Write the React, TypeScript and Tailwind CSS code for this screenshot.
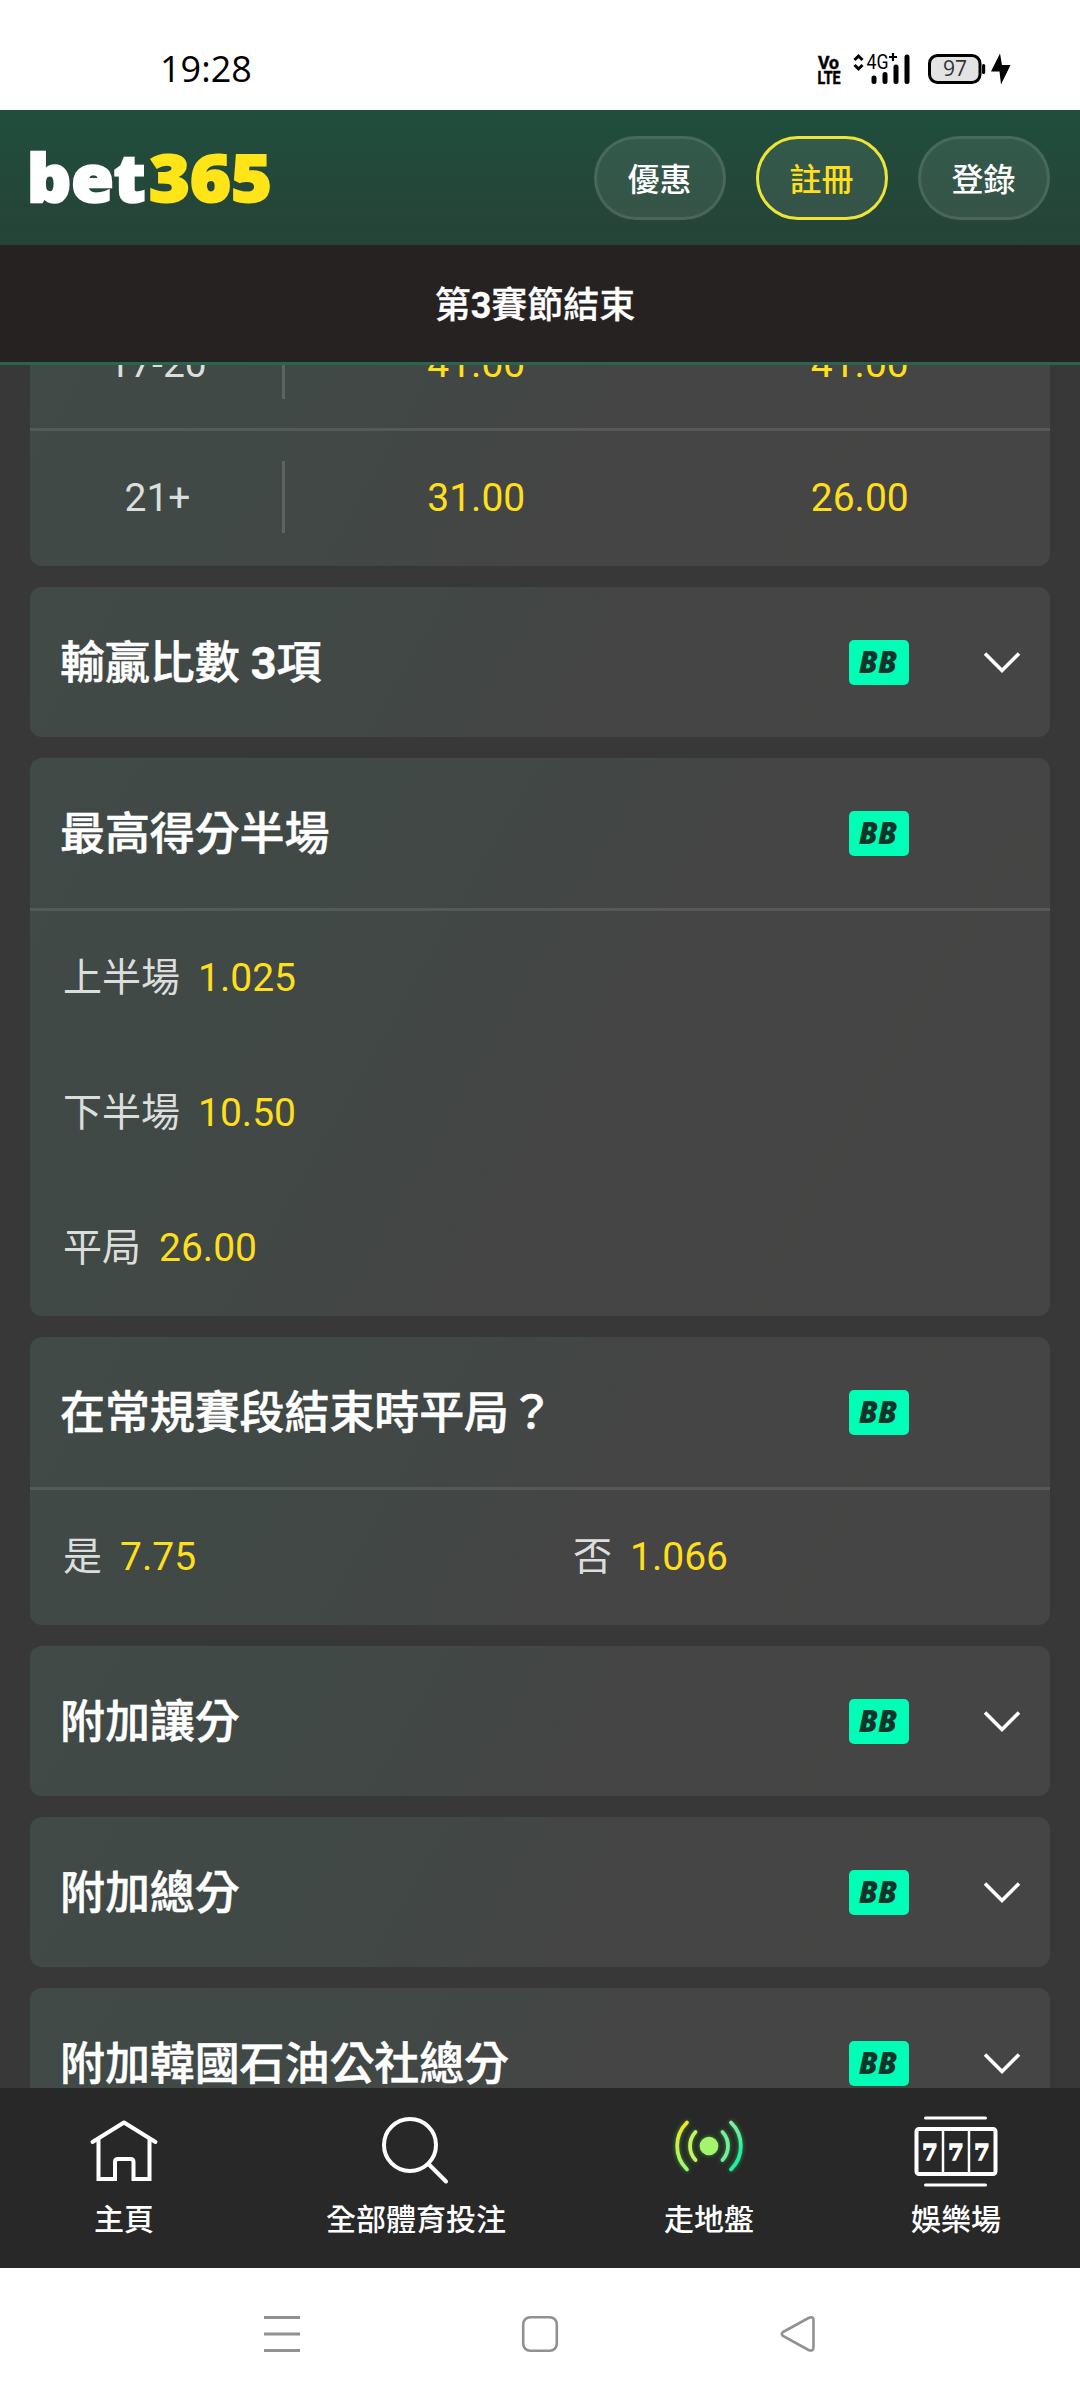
import React from "react";

const CJK = "font-['Roboto','Noto_Sans_CJK_TC',sans-serif]";

function VolteIcon() {
  return (
    <svg width="24" height="32" viewBox="0 0 24 32" stroke="black" strokeWidth="0.500" className="overflow-visible font-['Roboto',sans-serif] font-bold">
      <text x="1" y="15.500" fontSize="18.500" textLength="21" lengthAdjust="spacingAndGlyphs">Vo</text>
      <text x="0.500" y="31" fontSize="18.500" textLength="23" lengthAdjust="spacingAndGlyphs">LTE</text>
    </svg>
  );
}

function SignalIcon() {
  return (
    <svg width="58" height="32" viewBox="0 0 58 32" className="overflow-visible font-['Roboto',sans-serif]">
      <path d="M1.500 7 5.500 3 9.500 7M1.500 12 5.500 16 9.500 12" fill="none" stroke="black" strokeWidth="3" />
      <text x="13.500" y="16" fontSize="19.500" textLength="22" lengthAdjust="spacingAndGlyphs">4G</text>
      <path d="M40 0v8M36 4h8" stroke="black" strokeWidth="2.200" />
      <path d="M21 25v3.500M32 21.500v7M43 14v14.500M54 4v24.500" stroke="black" strokeWidth="5" strokeLinecap="round" />
    </svg>
  );
}

function BatteryIcon() {
  return (
    <svg width="86" height="32" viewBox="0 0 86 32" className="overflow-visible font-['Open_Sans',sans-serif] font-normal">
      <rect x="2.500" y="2.500" width="50.500" height="27" rx="8" fill="#e3e3e3" stroke="black" strokeWidth="3" />
      <rect x="55" y="11" width="3.200" height="10" rx="1.500" />
      <text x="16" y="23" fontSize="21" textLength="24" fill="#333">97</text>
      <path d="M73 0.500 64 18.500h8.500L74 31.500 83.500 12h-8.500z" />
    </svg>
  );
}

function StatusBar() {
  return (
    <div className="flex h-[110px] items-center justify-between bg-white pt-7 pr-[67px] pl-[160px] text-black">
      <span className="pb-px font-['Open_Sans',sans-serif] text-[36px] leading-none">19:28</span>
      <div className="flex items-center">
        <VolteIcon />
        <span className="w-[12px]" />
        <SignalIcon />
        <span className="w-[16px]" />
        <BatteryIcon />
      </div>
    </div>
  );
}

function Logo() {
  return (
    <svg width="246" height="60" viewBox="0 0 246 60" className="overflow-visible font-['Open_Sans',sans-serif] font-extrabold">
      <text x="-3" y="54" fontSize="65" fill="#fff" stroke="#fff" strokeWidth="2.400" textLength="118.500" lengthAdjust="spacingAndGlyphs">bet</text>
      <text x="119" y="54" fontSize="66" fill="#ffe418" stroke="#ffe418" strokeWidth="2" textLength="123" lengthAdjust="spacingAndGlyphs">365</text>
    </svg>
  );
}

function Header() {
  const base = "flex h-[84px] w-[132px] items-center justify-center rounded-full border-[3px] bg-white/[0.08] pt-[3px] pr-[1px] text-[32px] font-medium";
  return (
    <header className="flex h-[135px] items-center justify-between bg-linear-to-b from-[#1f4e3d] to-[#264338] px-[30px]">
      <Logo />
      <div className="flex gap-[30px] pt-[1px]">
        <button className={`${base} border-white/10 text-white`}>優惠</button>
        <button className={`${base} border-[#ece538] text-[#ffdf1b]`}>註冊</button>
        <button className={`${base} border-white/10 text-white`}>登錄</button>
      </div>
    </header>
  );
}

function Card({ children }: { children: React.ReactNode }) {
  return (
    <section className="overflow-hidden rounded-[12px] bg-[linear-gradient(120deg,#404a46_0%,#414845_35%,#444544_55%,#464545_100%)]">
      {children}
    </section>
  );
}

function BetBuilder() {
  return (
    <span className="flex h-[45px] w-[60px] items-center justify-center rounded-[5px] bg-[#00ffb6] font-['Open_Sans',sans-serif] text-[30px] leading-none font-extrabold tracking-[0.3px] text-[#10342a] italic">
      <span className="-translate-x-px">BB</span>
    </span>
  );
}

function CardTitle({ title, chevron }: { title: React.ReactNode; chevron?: boolean }) {
  return (
    <div className="flex h-[150px] items-center pr-[29px] pl-[30px]">
      <h2 className="flex-1 pt-[2px] text-[45px] leading-none font-medium tracking-[-0.1px] text-white [-webkit-text-stroke:0.5px]">{title}</h2>
      <BetBuilder />
      <div className="ml-[74px] w-[38px]">
        {chevron && (
          <svg width="38" height="24" viewBox="0 0 38 24" fill="none" className="block">
            <path d="M2 3.500 19 20.500 36 3.500" stroke="#fff" strokeWidth="3.600" />
          </svg>
        )}
      </div>
    </div>
  );
}

const Divider = () => <div className="h-[3px] bg-white/10" />;

function Selection({ label, odds }: { label: string; odds: string }) {
  return (
    <div className="flex h-[135px] flex-1 items-center gap-[18px] pl-[33px] text-[39px] leading-none">
      <span className="text-[#dcdedd]">{label}</span>
      <span className="text-[#ffdf1b]">{odds}</span>
    </div>
  );
}

function MarginRow({ label, home, away, first }: { label: string; home: string; away: string; first?: boolean }) {
  return (
    <div className={`flex h-[135px] items-center text-center text-[39px] leading-none ${first ? "pt-[7px]" : ""}`}>
      <span className="w-[252px] pl-[3px] text-[#dcdedd]">{label}</span>
      <span className="-mt-[3px] h-[72px] w-[3px] bg-white/15" />
      <span className="flex-1 pl-[1px] text-[#ffdf1b]">{home}</span>
      <span className="flex-1 pl-[3px] text-[#ffdf1b]">{away}</span>
    </div>
  );
}

function HomeIcon() {
  return (
    <svg width="72" height="72" viewBox="0 0 72 72" fill="none" stroke="#fff" strokeWidth="4">
      <path d="M4.500 28 36 8.500 67.500 28" strokeLinecap="round" strokeLinejoin="round" />
      <path d="M10.500 25V65h16.500V48q0-3 3-3h12.500q3 0 3 3V65H61.500V25" />
    </svg>
  );
}

function SearchIcon() {
  return (
    <svg width="72" height="72" viewBox="0 0 72 72" fill="none" stroke="#fff" strokeWidth="4" strokeLinecap="round">
      <circle cx="30" cy="31" r="26" />
      <path d="M49.500 51 66 67.500" />
    </svg>
  );
}

function LiveIcon() {
  return (
    <svg width="72" height="72" viewBox="0 0 72 72" fill="none" strokeWidth="3.800" strokeLinecap="round" className="overflow-visible drop-shadow-[0_0_2px_#2f9d2f]">
      <defs>
        <linearGradient id="yl" x1="0" y1="0" x2="0" y2="1"><stop stopColor="#ffe026" /><stop offset="1" stopColor="#9cf57a" /></linearGradient>
        <linearGradient id="gr" x1="0" y1="0" x2="0" y2="1"><stop stopColor="#8cecaa" /><stop offset="0.600" stopColor="#22efab" /><stop offset="1" stopColor="#22efab" /></linearGradient>
      </defs>
      <circle cx="36" cy="32" r="9.300" fill="#a4f56c" />
      <path d="M22.500 18a20.600 20.600 0 0 0 0 28" stroke="#cdf063" />
      <path d="M49.500 18a20.600 20.600 0 0 1 0 28" stroke="#75eca0" />
      <path d="M14 8.500a33 33 0 0 0 0 47" stroke="url(#yl)" />
      <path d="M58 8.500a33 33 0 0 1 0 47" stroke="url(#gr)" />
    </svg>
  );
}

function CasinoIcon() {
  return (
    <svg width="84" height="72" viewBox="0 0 84 72" fill="none" stroke="#fff" className="overflow-visible font-['DejaVu_Serif',serif] font-bold">
      <path d="M11.500 4h60M11.500 71h60" strokeWidth="3" strokeLinecap="round" />
      <rect x="2.500" y="15" width="79" height="45" rx="2.500" strokeWidth="4" />
      <path d="M29 15v45M55 15v45" strokeWidth="2.500" />
      <g fill="#fff" strokeWidth="1.400" fontSize="22" textAnchor="middle">
        <text x="16" y="45.500">7</text>
        <text x="42" y="45.500">7</text>
        <text x="68" y="45.500">7</text>
      </g>
    </svg>
  );
}

function BottomNav() {
  const item = "flex flex-col items-center pt-[26px] text-[30px] leading-none font-medium text-white";
  return (
    <nav className="flex h-[180px] bg-[#282828]">
      <div className={`${item} w-[248px]`}><HomeIcon /><span className="mt-[19px]">主頁</span></div>
      <div className={`${item} w-[336px]`}><SearchIcon /><span className="mt-[19px]">全部體育投注</span></div>
      <div className={`${item} w-[250px]`}><LiveIcon /><span className="mt-[19px]">走地盤</span></div>
      <div className={`${item} w-[244px]`}><CasinoIcon /><span className="mt-[19px]">娛樂場</span></div>
    </nav>
  );
}

function SystemNav() {
  return (
    <div className="flex h-[132px] items-center justify-center gap-[218px] bg-white">
      <svg width="40" height="40" viewBox="0 0 40 40" stroke="#919191" strokeWidth="3">
        <path d="M2 3.500h36M2 20h36M2 36.500h36" />
      </svg>
      <svg width="40" height="40" viewBox="0 0 40 40" fill="none" stroke="#919191" strokeWidth="2.600">
        <rect x="3.200" y="3.200" width="33.600" height="33.600" rx="7" />
      </svg>
      <svg width="40" height="40" viewBox="0 0 40 40" fill="none" stroke="#919191" strokeWidth="2.600">
        <path d="M5 18 30.500 4Q35.500 2 35.500 6V33Q35.500 38 30.500 36L5 22Q2.500 20 5 18Z" />
      </svg>
    </div>
  );
}

export default function App() {
  return (
    <div className={`flex h-[2400px] w-[1080px] flex-col overflow-hidden bg-[#383838] ${CJK}`} lang="zh-Hant">
      <StatusBar />
      <Header />
      <div className="flex h-[120px] items-center justify-center border-b-[3px] border-[#28644e] bg-[#262221] pt-[4px] pr-[10px] text-[36px] font-medium text-white [-webkit-text-stroke:0.3px]">
        <p>第<span className="font-bold">3</span>賽節結束</p>
      </div>
      <main className="h-[1723px] overflow-hidden px-[30px]">
        <div className="-mt-[72px] flex flex-col gap-[21px]">
          <Card>
            <MarginRow label="17-20" home="41.00" away="41.00" first />
            <Divider />
            <MarginRow label="21+" home="31.00" away="26.00" />
          </Card>
          <Card><CardTitle title={<>輸贏比數 <span className="font-bold">3</span>項</>} chevron /></Card>
          <Card>
            <CardTitle title="最高得分半場" />
            <Divider />
            <Selection label="上半場" odds="1.025" />
            <Selection label="下半場" odds="10.50" />
            <Selection label="平局" odds="26.00" />
          </Card>
          <Card>
            <CardTitle title="在常規賽段結束時平局？" />
            <Divider />
            <div className="flex">
              <Selection label="是" odds="7.75" />
              <Selection label="否" odds="1.066" />
            </div>
          </Card>
          <Card><CardTitle title="附加讓分" chevron /></Card>
          <Card><CardTitle title="附加總分" chevron /></Card>
          <Card><CardTitle title="附加韓國石油公社總分" chevron /></Card>
        </div>
      </main>
      <BottomNav />
      <SystemNav />
    </div>
  );
}
